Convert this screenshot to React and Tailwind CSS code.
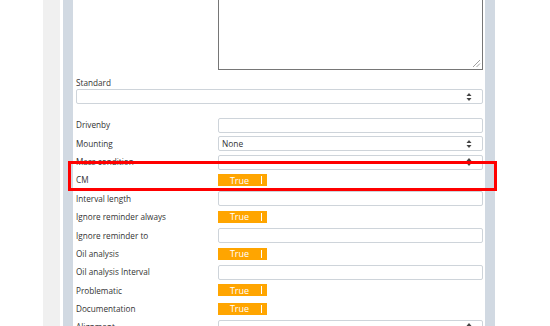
import React from "react";

const font = { fontFamily: '"Open Sans", "Noto Sans", sans-serif' };

function Arrows() {
  return (
    <svg width="6" height="9" viewBox="0 0 6 9" className="absolute right-[10px] top-1/2 -translate-y-1/2">
      <path d="M0.5 3.5 L3 0.5 L5.5 3.5 Z" fill="#444" />
      <path d="M0.5 5.5 L3 8.5 L5.5 5.5 Z" fill="#444" />
    </svg>
  );
}

function Input() {
  return <div className="h-[15px] flex-1 rounded-[2px] border border-[#ced4da] bg-white" />;
}

function Select({ value }) {
  return (
    <div className="relative h-[15px] flex-1 rounded-[2px] border border-[#ced4da] bg-white flex items-center pl-[3px] text-[8.4px] text-[#333]">
      {value}
      <Arrows />
    </div>
  );
}

function Toggle() {
  return (
    <div className="relative mt-[1px] h-[12px] w-[49px] bg-[#ffa500] flex items-center">
      <span className="w-[43px] text-center text-[9px] leading-none text-white">True</span>
      <span className="absolute left-[43px] top-[2px] h-[8px] w-[1px] bg-white" />
    </div>
  );
}

const rows = [
  ["Drivenby", "input"],
  ["Mounting", "select", "None"],
  ["Mass condition", "select", ""],
  ["CM", "toggle"],
  ["Interval length", "input"],
  ["Ignore reminder always", "toggle"],
  ["Ignore reminder to", "input"],
  ["Oil analysis", "toggle"],
  ["Oil analysis Interval", "input"],
  ["Problematic", "toggle"],
  ["Documentation", "toggle"],
  ["Alignment", "select", ""],
];

export default function App() {
  return (
    <div className="relative w-[550px] h-[326px] overflow-hidden bg-white flex" style={font}>
      <div className="w-[43px] shrink-0 bg-white" />
      <div className="w-[17px] shrink-0 bg-[#f0f0f0]" />
      <div className="w-[3px] shrink-0 bg-white" />
      <div className="w-[10px] shrink-0 bg-[#d1d9e2]" />
      <div className="w-[412px] shrink-0 bg-white pl-[3px] pr-[2px] flex flex-col">
        <div className="flex">
          <div className="w-[142px] shrink-0" />
          <div className="relative flex-1 h-[70px] border border-t-0 border-[#767676] bg-white">
            <svg width="9" height="9" viewBox="0 0 9 9" className="absolute right-[1px] bottom-[1px]">
              <path d="M8 1 L1 8 M8 4.5 L4.5 8" stroke="#888" strokeWidth="0.8" />
            </svg>
          </div>
        </div>
        <div className="mt-[6px] text-[8.2px] leading-[13px] text-[#333]">Standard</div>
        <div className="flex">
          <Select value="" />
        </div>
        <div className="mt-[14px] flex flex-col">
          {rows.map(([label, kind, val]) => (
            <div key={label} className="flex h-[18.36px] shrink-0 items-start">
              <div className="w-[142px] shrink-0 h-[15px] flex items-center text-[8.2px] text-[#333] whitespace-nowrap">
                {label}
              </div>
              {kind === "input" && <Input />}
              {kind === "select" && <Select value={val} />}
              {kind === "toggle" && <Toggle />}
            </div>
          ))}
        </div>
      </div>
      <div className="w-[10px] shrink-0 bg-[#d1d9e2]" />
      <div className="flex-1 bg-white" />
      <div className="absolute left-[68px] top-[161px] w-[429px] h-[30px] border-[3px] border-[#ff0000]" />
    </div>
  );
}
